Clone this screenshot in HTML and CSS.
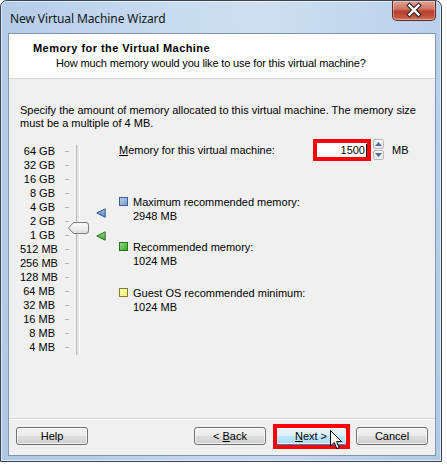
FILE: index.html
```html
<!DOCTYPE html>
<html>
<head>
<meta charset="utf-8">
<title>New Virtual Machine Wizard</title>
<link rel="stylesheet" href="styles.css">
</head>
<body>
<div class="window">
  <div class="titlebar">
    <span class="title">New Virtual Machine Wizard</span>
    <div class="close">
      <svg width="44" height="20" viewBox="0 0 44 20">
        <path d="M17.5 5.5 L26.5 14.5 M26.5 5.5 L17.5 14.5" stroke="#3b2a2a" stroke-width="4.6" stroke-linecap="square"/>
        <path d="M17.5 5.5 L26.5 14.5 M26.5 5.5 L17.5 14.5" stroke="#ffffff" stroke-width="2.4" stroke-linecap="square"/>
      </svg>
    </div>
  </div>
  <div class="client">
    <div class="header">
      <div class="h-title">Memory for the Virtual Machine</div>
      <div class="h-sub">How much memory would you like to use for this virtual machine?</div>
    </div>
    <div class="body">
      <p class="intro">Specify the amount of memory allocated to this virtual machine. The memory size<br>must be a multiple of 4 MB.</p>
      <div class="main">
        <div class="slider">
          <ul class="scale">
            <li>64 GB</li><li>32 GB</li><li>16 GB</li><li>8 GB</li><li>4 GB</li><li>2 GB</li><li>1 GB</li>
            <li>512 MB</li><li>256 MB</li><li>128 MB</li><li>64 MB</li><li>32 MB</li><li>16 MB</li><li>8 MB</li><li>4 MB</li>
          </ul>
          <div class="track"></div>
          <svg class="thumb" width="21" height="12" viewBox="0 0 21 12">
            <defs><linearGradient id="tg" x1="0" y1="0" x2="0" y2="1"><stop offset="0" stop-color="#ffffff"/><stop offset="1" stop-color="#dcdcdc"/></linearGradient></defs>
            <path d="M0.5 6 L5.5 0.5 H18 Q20.5 0.5 20.5 3 V9 Q20.5 11.5 18 11.5 H5.5 Z" fill="url(#tg)" stroke="#7d7d7d"/>
          </svg>
          <svg class="mark mark-max" width="10" height="10" viewBox="0 0 10 10">
            <defs><linearGradient id="bg" x1="0" y1="0" x2="0" y2="1"><stop offset="0" stop-color="#a9c3e6"/><stop offset="1" stop-color="#5b84bf"/></linearGradient></defs>
            <path d="M0.8 5 L9.2 0.8 V9.2 Z" fill="url(#bg)" stroke="#2d5590" stroke-linejoin="round"/>
          </svg>
          <svg class="mark mark-rec" width="10" height="10" viewBox="0 0 10 10">
            <defs><linearGradient id="gg" x1="0" y1="0" x2="0" y2="1"><stop offset="0" stop-color="#9be08a"/><stop offset="1" stop-color="#3ea42c"/></linearGradient></defs>
            <path d="M0.8 5 L9.2 0.8 V9.2 Z" fill="url(#gg)" stroke="#237318" stroke-linejoin="round"/>
          </svg>
        </div>
        <div class="settings">
          <div class="mem-row">
            <span class="mem-label"><u>M</u>emory for this virtual machine:</span>
            <div class="field"><span>1500</span><span class="caret"></span></div>
            <div class="spin">
              <div class="spin-btn"><svg width="7" height="4" viewBox="0 0 7 4"><path d="M0 4 L3.5 0 L7 4 Z" fill="#4f6a96"/></svg></div>
              <div class="spin-btn"><svg width="7" height="4" viewBox="0 0 7 4"><path d="M0 0 L3.5 4 L7 0 Z" fill="#4f6a96"/></svg></div>
            </div>
            <span class="unit">MB</span>
          </div>
          <div class="legend">
            <div class="item item-max">
              <span class="sq sq-blue"></span>
              <div class="item-text"><div>Maximum recommended memory:</div><div>2948 MB</div></div>
            </div>
            <div class="item item-rec">
              <span class="sq sq-green"></span>
              <div class="item-text"><div>Recommended memory:</div><div>1024 MB</div></div>
            </div>
            <div class="item item-min">
              <span class="sq sq-yellow"></span>
              <div class="item-text"><div>Guest OS recommended minimum:</div><div>1024 MB</div></div>
            </div>
          </div>
        </div>
      </div>
    </div>
    <div class="footer">
      <button class="btn">Help</button>
      <div class="spacer"></div>
      <button class="btn">&lt; <u>B</u>ack</button>
      <div class="next-wrap">
        <button class="btn btn-next"><u>N</u>ext &gt;</button>
        <span class="highlight"></span>
        <svg class="cursor" width="13" height="20" viewBox="0 0 13 20">
          <path d="M0.5 0.5 V16 L4.2 12.4 L6.8 18.6 L9.2 17.6 L6.6 11.6 H11.6 Z" fill="#ffffff" stroke="#000000" stroke-linejoin="miter"/>
        </svg>
      </div>
      <button class="btn">Cancel</button>
    </div>
  </div>
</div>
</body>
</html>
```

FILE: styles.css
```css
* { box-sizing: border-box; }
html, body { margin: 0; padding: 0; background: #ffffff; }
body {
  font-family: "Liberation Sans", Arial, sans-serif;
  font-size: 11px;
  color: #000000;
}

.window {
  position: relative;
  width: 442px;
  height: 462px;
  border: 1px solid #3a4656;
  border-radius: 7px 7px 0 0;
  background:
    linear-gradient(90deg, rgba(170,196,228,0.55) 0%, rgba(214,228,243,0.35) 40%, rgba(225,235,246,0.4) 60%, rgba(176,200,230,0.5) 100%),
    linear-gradient(180deg, #c3d7ee 0%, #bcd2ea 50%, #b4cbe6 100%);
  padding: 0 5px 5px 7px;
  display: flex;
  flex-direction: column;
  box-shadow: inset 0 0 0 1px rgba(255,255,255,0.55);
}

.titlebar {
  height: 32px;
  display: flex;
  align-items: center;
  padding: 2px 0 0 2px;
}
.title {
  font-family: "Noto Sans", "Open Sans", sans-serif;
  font-size: 12px;
  color: #101820;
  letter-spacing: -0.1px;
}
.close {
  position: absolute;
  top: 0;
  right: 5px;
  width: 44px;
  height: 20px;
  border: 1px solid #5c2a22;
  border-top: none;
  border-radius: 0 0 5px 5px;
  background: linear-gradient(180deg, #e3a496 0%, #cf7665 40%, #b9402f 55%, #c4553d 85%, #d88068 100%);
  box-shadow: inset 0 0 0 1px rgba(255,255,255,0.35);
}
.close svg { display: block; margin: -1px 0 0 -1px; }

.client {
  flex: 1;
  display: flex;
  flex-direction: column;
  border: 1px solid #8195ac;
  background: #f0f0f0;
}

.header {
  height: 45px;
  background: #ffffff;
  border-bottom: 1px solid #d8d8d8;
  padding: 7px 0 0 24px;
  line-height: 14px;
}
.h-title { font-weight: bold; letter-spacing: 0.45px; }
.h-sub { padding-left: 23px; margin-top: 1px; letter-spacing: -0.15px; }

.body {
  flex: 1;
  padding: 25px 11px 0 11px;
}
.intro {
  margin: 0;
  line-height: 13px;
  white-space: nowrap;
}

.main {
  display: flex;
  margin-top: 9px;
}

.slider {
  position: relative;
  width: 99px;
  padding-top: 5px;
}
.scale {
  list-style: none;
  margin: 0;
  padding: 0;
  width: 35px;
  text-align: right;
}
.scale li {
  position: relative;
  height: 14px;
  line-height: 14px;
  white-space: nowrap;
}
.scale li::after {
  content: "";
  position: absolute;
  left: 45px;
  top: 7px;
  width: 4px;
  height: 1px;
  background: #b4b4b4;
}
.track {
  position: absolute;
  left: 56px;
  top: 6px;
  width: 4px;
  height: 210px;
  border-left: 1px solid #bdbdbd;
  border-right: 1px solid #ffffff;
  background: #e4e4e4;
}
.thumb {
  position: absolute;
  left: 48px;
  top: 83px;
  display: block;
}
.mark { position: absolute; left: 76px; display: block; }
.mark-max { top: 69px; }
.mark-rec { top: 92px; }

.settings { flex: 1; }
.mem-row {
  display: flex;
  align-items: center;
  height: 22px;
}
.mem-label { width: 194px; white-space: nowrap; }
.field {
  width: 58px;
  height: 22px;
  border: 4px solid #ff0000;
  background: #ffffff;
  display: flex;
  align-items: center;
  justify-content: flex-end;
  padding-right: 0;
  line-height: 13px;
}
.caret {
  display: inline-block;
  width: 1px;
  height: 13px;
  background: #000000;
  margin-left: 1px;
}
.spin {
  margin-left: 2px;
  width: 11px;
  height: 21px;
  display: flex;
  flex-direction: column;
  gap: 1px;
  margin-top: -1px;
}
.spin-btn {
  flex: 1;
  border: 1px solid #b9b9b9;
  border-radius: 2px;
  background: linear-gradient(180deg, #f7f7f7, #e6e6e6);
  display: flex;
  align-items: center;
  justify-content: center;
}
.spin-btn svg { display: block; }
.unit { margin-left: 8px; }

.legend { margin-top: 34px; }
.item { display: flex; line-height: 14px; }
.item-rec { margin-top: 17px; }
.item-min { margin-top: 18px; }
.item-text { margin-left: 5px; }
.sq {
  width: 9px;
  height: 9px;
  margin-top: 2px;
  flex: none;
  border: 1px solid;
}
.sq-blue { background: linear-gradient(135deg, #b7cbe9, #7c9dd0); border-color: #3d5f95; }
.sq-green { background: linear-gradient(135deg, #8fdc7f, #3aa82a); border-color: #2a6f1e; }
.sq-yellow { background: linear-gradient(135deg, #ffffb8, #f5f36a); border-color: #7f7c3c; }

.footer {
  height: 37px;
  border-top: 1px solid #d5d5d5;
  box-shadow: inset 0 1px 0 #ffffff;
  display: flex;
  align-items: flex-start;
  padding: 8px 7px 0 7px;
}
.spacer { flex: 1; }
.btn {
  width: 72px;
  height: 18px;
  margin: 0;
  padding: 0;
  font-family: "Liberation Sans", Arial, sans-serif;
  font-size: 11px;
  color: #000000;
  border: 1px solid #707070;
  border-radius: 3px;
  background: linear-gradient(180deg, #f2f2f2 0%, #ebebeb 48%, #dddddd 52%, #cfcfcf 100%);
  box-shadow: inset 0 0 0 1px rgba(255,255,255,0.7);
  line-height: 16px;
}
.btn + .btn, .btn + .next-wrap, .next-wrap + .btn { margin-left: 9px; }
.next-wrap { position: relative; margin-left: 9px; }
.btn-next {
  display: block;
  border-color: #3c7fb1;
  background: linear-gradient(180deg, #eaf6fd 0%, #d9f0fc 48%, #bee6fd 52%, #a7d9f5 100%);
}
.highlight {
  position: absolute;
  left: -2px;
  top: -3px;
  right: -3px;
  bottom: -4px;
  border: 4px solid #ff0000;
  pointer-events: none;
}
.cursor {
  position: absolute;
  left: 55px;
  top: 3px;
  display: block;
}
```
